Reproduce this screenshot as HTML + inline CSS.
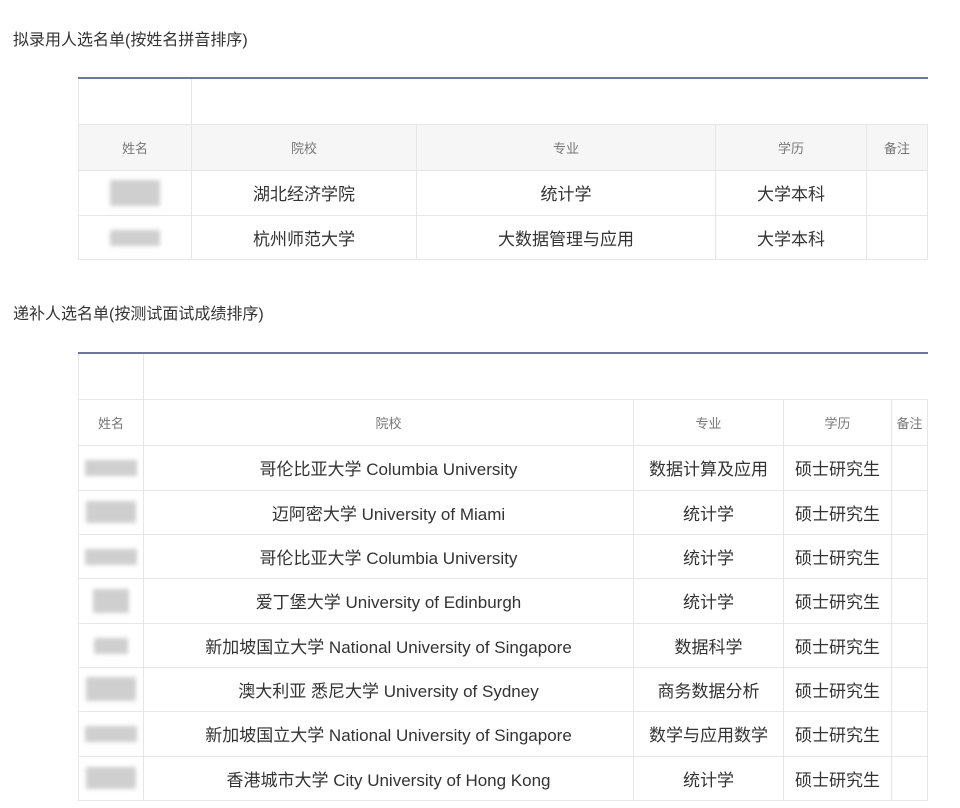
<!DOCTYPE html>
<html><head><meta charset="utf-8">
<style>
body{margin:0;width:960px;height:808px;background:#fff;font-family:"Liberation Sans","Noto Sans CJK SC",sans-serif;color:#333;position:relative;overflow:hidden}
.t{position:absolute;left:13px;font-size:16px;color:#333}
table{position:absolute;left:78px;width:849px;border-collapse:collapse;table-layout:fixed;border-top:2px solid #6d7796}
td{border:1px solid #e6e6e6;text-align:center;padding:0;font-size:17px;color:#333;white-space:nowrap;overflow:hidden}
tr.h td{font-size:13px;color:#777}
.g td{background:#f6f6f6}
.b{display:inline-block;height:16px;background:#cfcfcf;filter:blur(2px);vertical-align:middle}
</style></head><body>
<div class="t" style="top:26px">拟录用人选名单(按姓名拼音排序)</div>
<table style="top:77px">
<colgroup><col style="width:113px"><col style="width:225px"><col style="width:299px"><col style="width:151px"><col style="width:61px"></colgroup>
<tr style="height:46px"><td></td><td colspan="4" style="border-right:none"></td></tr>
<tr class="h g" style="height:46px"><td>姓名</td><td>院校</td><td>专业</td><td>学历</td><td>备注</td></tr>
<tr style="height:45px"><td><span class="b" style="width:50px;height:26px"></span></td><td>湖北经济学院</td><td>统计学</td><td>大学本科</td><td></td></tr>
<tr style="height:44px"><td><span class="b" style="width:50px"></span></td><td>杭州师范大学</td><td>大数据管理与应用</td><td>大学本科</td><td></td></tr>
</table>
<div class="t" style="top:300px">递补人选名单(按测试面试成绩排序)</div>
<table style="top:352px">
<colgroup><col style="width:65px"><col style="width:490px"><col style="width:150px"><col style="width:108px"><col style="width:36px"></colgroup>
<tr style="height:46px"><td></td><td colspan="4" style="border-right:none"></td></tr>
<tr class="h" style="height:46px"><td>姓名</td><td>院校</td><td>专业</td><td>学历</td><td>备注</td></tr>
<tr style="height:45px"><td><span class="b" style="width:52px"></span></td><td>哥伦比亚大学 Columbia University</td><td>数据计算及应用</td><td>硕士研究生</td><td></td></tr>
<tr style="height:44px"><td><span class="b" style="width:50px;height:22px"></span></td><td>迈阿密大学 University of Miami</td><td>统计学</td><td>硕士研究生</td><td></td></tr>
<tr style="height:44px"><td><span class="b" style="width:52px"></span></td><td>哥伦比亚大学 Columbia University</td><td>统计学</td><td>硕士研究生</td><td></td></tr>
<tr style="height:45px"><td><span class="b" style="width:36px;height:24px"></span></td><td>爱丁堡大学 University of Edinburgh</td><td>统计学</td><td>硕士研究生</td><td></td></tr>
<tr style="height:44px"><td><span class="b" style="width:34px"></span></td><td>新加坡国立大学 National University of Singapore</td><td>数据科学</td><td>硕士研究生</td><td></td></tr>
<tr style="height:44px"><td><span class="b" style="width:50px;height:24px"></span></td><td>澳大利亚 悉尼大学 University of Sydney</td><td>商务数据分析</td><td>硕士研究生</td><td></td></tr>
<tr style="height:45px"><td><span class="b" style="width:52px"></span></td><td>新加坡国立大学 National University of Singapore</td><td>数学与应用数学</td><td>硕士研究生</td><td></td></tr>
<tr style="height:44px"><td><span class="b" style="width:50px;height:22px"></span></td><td>香港城市大学 City University of Hong Kong</td><td>统计学</td><td>硕士研究生</td><td></td></tr>
</table>
</body></html>
